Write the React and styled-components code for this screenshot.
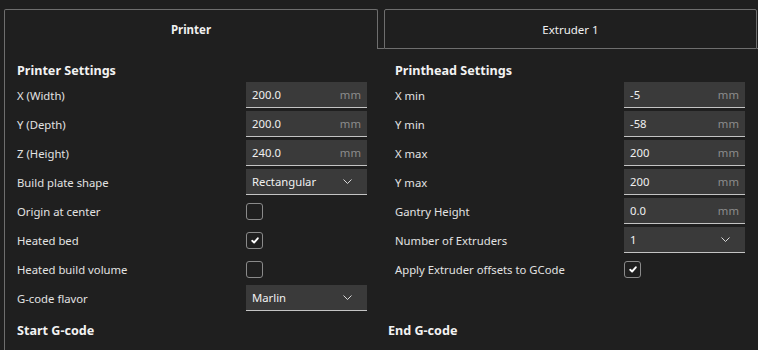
import React from "react";
import styled, { createGlobalStyle } from "styled-components";

const Global = createGlobalStyle`
  html, body { margin: 0; padding: 0; background: #1f1f1f; }
  body { font-family: "Noto Sans", "Open Sans", sans-serif; color: #e4e4e4; }
  * { box-sizing: border-box; }
`;

const Page = styled.div`
  width: 758px;
  height: 350px;
  overflow: hidden;
  padding: 9px 0 0 4px;
  background: #1f1f1f;
`;

const TabBar = styled.div`
  display: flex;
  align-items: stretch;
  height: 40px;
`;

const Tab = styled.div`
  width: ${(p) => p.$w}px;
  display: flex;
  align-items: center;
  justify-content: center;
  font-size: 11.5px;
  color: #f0f0f0;
  font-weight: ${(p) => (p.$active ? 700 : 400)};
  border: 1px solid #6e6e6e;
  border-bottom: ${(p) => (p.$active ? "none" : "1px solid #6e6e6e")};
  border-radius: 2px 2px 0 0;
  padding-bottom: ${(p) => (p.$active ? 1 : 0)}px;
`;

const TabGap = styled.div`
  width: ${(p) => p.$w}px;
  border-bottom: 1px solid #6e6e6e;
`;

const Panel = styled.div`
  border-left: 1px solid #6e6e6e;
  height: 320px;
  padding: 12px 0 0 12px;
  display: grid;
  grid-template-columns: 378px 378px;
  align-content: start;
`;

const Column = styled.div`
  display: flex;
  flex-direction: column;
`;

const Heading = styled.div`
  font-size: 12.6px;
  font-weight: 700;
  color: #f2f2f2;
  height: 21px;
  line-height: 19px;
  margin-left: ${(p) => p.$shift || 0}px;
`;

const Footer = styled(Heading)`
  line-height: 21px;
`;

const Rows = styled.div`
  display: flex;
  flex-direction: column;
  gap: 3px;
  height: 238px;
`;

const Row = styled.div`
  display: grid;
  grid-template-columns: 229px 121px;
  align-items: center;
  height: 26px;
`;

const Label = styled.div`
  font-size: 11.3px;
  color: #e2e2e2;
  white-space: nowrap;
`;

const Field = styled.div`
  height: 26px;
  background: #3a3a3a;
  border-bottom: 1px solid #c4c4c4;
  display: flex;
  align-items: center;
  justify-content: space-between;
  padding: 0 6px 0 6px;
  font-size: 11.3px;
  color: #f0f0f0;
`;

const Unit = styled.span`
  color: #8c8c8c;
  font-size: 11.3px;
`;

const Chevron = styled.svg`
  width: 9px;
  height: 5px;
  margin-right: 9px;
`;

const Box = styled.div`
  width: 17px;
  height: 17px;
  border: 1px solid #8a8a8a;
  border-radius: 3px;
  display: flex;
  align-items: center;
  justify-content: center;
`;

const Check = () => (
  <svg width="8" height="7" viewBox="0 0 8 7">
    <path d="M1.2 3.8 L3.1 5.5 L6.8 1.3" fill="none" stroke="#ffffff" strokeWidth="1.9" strokeLinecap="round" strokeLinejoin="round" />
  </svg>
);

const Control = ({ c }) => {
  if (c.type === "num")
    return (
      <Field>
        <span>{c.value}</span>
        <Unit>mm</Unit>
      </Field>
    );
  if (c.type === "select")
    return (
      <Field>
        <span>{c.value}</span>
        <Chevron viewBox="0 0 9 5">
          <polyline points="0.5,0.5 4.5,4.5 8.5,0.5" fill="none" stroke="#d8d8d8" strokeWidth="1" />
        </Chevron>
      </Field>
    );
  return <Box>{c.checked && <Check />}</Box>;
};

const left = [
  ["X (Width)", { type: "num", value: "200.0" }],
  ["Y (Depth)", { type: "num", value: "200.0" }],
  ["Z (Height)", { type: "num", value: "240.0" }],
  ["Build plate shape", { type: "select", value: "Rectangular" }],
  ["Origin at center", { type: "check", checked: false }],
  ["Heated bed", { type: "check", checked: true }],
  ["Heated build volume", { type: "check", checked: false }],
  ["G-code flavor", { type: "select", value: "Marlin" }],
];

const right = [
  ["X min", { type: "num", value: "-5" }],
  ["Y min", { type: "num", value: "-58" }],
  ["X max", { type: "num", value: "200" }],
  ["Y max", { type: "num", value: "200" }],
  ["Gantry Height", { type: "num", value: "0.0" }],
  ["Number of Extruders", { type: "select", value: "1" }],
  ["Apply Extruder offsets to GCode", { type: "check", checked: true }],
];

const Section = ({ title, rows, footer, footerShift }) => (
  <Column>
    <Heading>{title}</Heading>
    <Rows>
      {rows.map(([label, c]) => (
        <Row key={label}>
          <Label>{label}</Label>
          <Control c={c} />
        </Row>
      ))}
    </Rows>
    <Footer $shift={footerShift}>{footer}</Footer>
  </Column>
);

export default function App() {
  return (
    <Page>
      <Global />
      <TabBar>
        <Tab $active $w={374}>Printer</Tab>
        <TabGap $w={6} />
        <Tab $w={373}>Extruder 1</Tab>
        <TabGap $w={1} />
      </TabBar>
      <Panel>
        <Section title="Printer Settings" rows={left} footer="Start G-code" />
        <Section title="Printhead Settings" rows={right} footer="End G-code" footerShift={-7} />
      </Panel>
    </Page>
  );
}
